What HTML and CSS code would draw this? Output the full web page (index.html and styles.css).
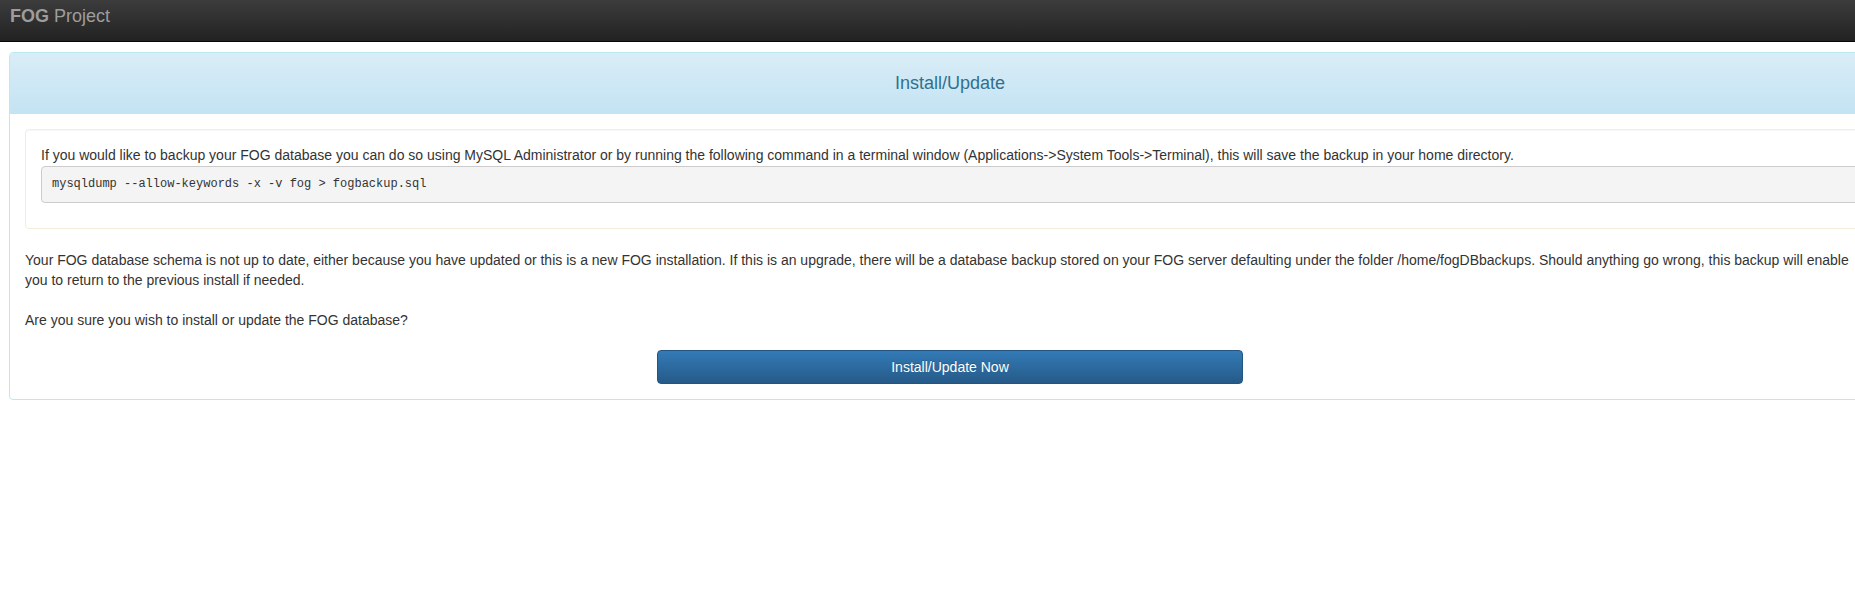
FILE: index.html
```html
<!DOCTYPE html>
<html lang="en">
<head>
    <meta charset="UTF-8">
    <meta name="viewport" content="width=device-width, initial-scale=1.0">
    <title>FOG Project - Install/Update</title>
    <link rel="stylesheet" href="styles.css">
</head>
<body>

<nav class="topbar">
    <a class="brand" href="#"><b>FOG</b> Project</a>
</nav>

<div class="page">
    <div class="panel">
        <div class="panel-heading">
            <h3 class="panel-title">Install/Update</h3>
        </div>
        <div class="panel-body">
            <!-- backup hint -->
            <div class="well">
                If you would like to backup your FOG database you can do so using MySQL Administrator or by running the following command in a terminal window (Applications-&gt;System Tools-&gt;Terminal), this will save the backup in your home directory.
                <pre>mysqldump --allow-keywords -x -v fog &gt; fogbackup.sql</pre>
            </div>

            <p class="notice">
                Your FOG database schema is not up to date, either because you have updated or this is a new FOG installation. If this is an upgrade, there will be a database backup stored on your FOG server defaulting under the folder /home/fogDBbackups. Should anything go wrong, this backup will enable you to return to the previous install if needed.<br><br>Are you sure you wish to install or update the FOG database?
            </p>

            <form class="actions" method="post" onsubmit="return false;">
                <button type="submit" class="btn-install">Install/Update Now</button>
            </form>
        </div>
    </div>
</div>

</body>
</html>
```

FILE: styles.css
```css
html, body {
    overflow-x: hidden;
}

body {
    margin: 0;
    font-family: "Liberation Sans", Arial, Helvetica, sans-serif;
    font-size: 14px;
    line-height: 20px;
    color: #333333;
    background-color: #ffffff;
}

/* top navigation bar */
.topbar {
    height: 41px;
    background-image: linear-gradient(to bottom, #3c3c3c 0%, #222222 100%);
    border-bottom: 1px solid #080808;
}

.brand {
    display: inline-block;
    padding: 6px 10px 0 10px;
    font-size: 18px;
    line-height: 20px;
    color: #9d9d9d;
    text-decoration: none;
}

.brand b {
    font-weight: bold;
}

.page {
    padding: 10px 0 0 9px;
}

/* panel */
.panel {
    width: 1880px;
    border: 1px solid #bce8f1;
    border-radius: 4px;
    background-color: #ffffff;
}

.panel-heading {
    padding: 20px 15px 19px 15px;
    border-bottom: 1px solid #bce8f1;
    border-radius: 3px 3px 0 0;
    background-image: linear-gradient(to bottom, #d9edf7 0%, #c4e3f3 100%);
    text-align: center;
}

.panel-title {
    margin: 0;
    font-size: 18px;
    font-weight: normal;
    line-height: 21px;
    color: #31708f;
}

.panel-body {
    padding: 15px;
}

.well {
    padding: 15px 15px 15px 15px;
    margin-bottom: 21px;
    border: 1px solid #f5eddb;
    border-radius: 4px;
    background-color: #ffffff;
    box-shadow: inset 0 1px 1px rgba(0, 0, 0, 0.03);
}

.well pre {
    margin: 1px 0 10px 0;
    padding: 8px 10px;
    font-family: "Liberation Mono", Consolas, monospace;
    font-size: 12px;
    line-height: 19px;
    color: #333333;
    background-color: #f4f4f4;
    border: 1px solid #cccccc;
    border-radius: 4px;
}

.notice {
    margin: 0 0 20px 0;
}

/* button sits in the middle third */
.actions {
    display: grid;
    grid-template-columns: 1fr 1fr 1fr;
    margin: 0;
}

.btn-install {
    grid-column: 2;
    margin: 0 15px;
    height: 34px;
    padding: 6px 12px;
    font-family: inherit;
    font-size: 14px;
    line-height: 20px;
    color: #ffffff;
    background-image: linear-gradient(to bottom, #337ab7 0%, #265a88 100%);
    border: 1px solid #245580;
    border-radius: 4px;
    text-shadow: 0 -1px 0 rgba(0, 0, 0, 0.2);
    cursor: pointer;
}

.btn-install:hover {
    background-image: none;
    background-color: #265a88;
}
```
